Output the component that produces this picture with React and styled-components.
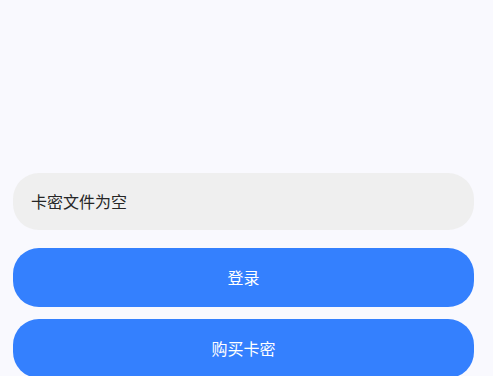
import React from "react";
import styled, { createGlobalStyle } from "styled-components";

const Global = createGlobalStyle`
  html, body { margin: 0; padding: 0; background: #f9f9fe; }
  body { font-family: "Noto Sans CJK SC", "Noto Sans", sans-serif; overflow: hidden; }
`;

const Page = styled.div`
  width: 493px;
  height: 376px;
  box-sizing: border-box;
  padding: 173px 19px 0 13px;
  display: flex;
  flex-direction: column;
  background: #f9f9fe;
  overflow: hidden;
`;

const Field = styled.div`
  flex: none;
  height: 57px;
  border-radius: 26px;
  background: #efefef;
  display: flex;
  align-items: center;
  padding: 0 0 2px 18px;
  box-sizing: border-box;
  font-size: 16px;
  line-height: 1;
  color: #262626;
`;

const Button = styled.button`
  flex: none;
  height: 59px;
  border: none;
  border-radius: 26px;
  background: #3480fe;
  color: #ffffff;
  font-family: inherit;
  font-size: 16px;
  line-height: 1;
  margin-top: ${(p) => p.$gap}px;
  display: flex;
  align-items: center;
  justify-content: center;
  padding: 0 0 2px;
`;

export default function App() {
  return (
    <>
      <Global />
      <Page>
        <Field>卡密文件为空</Field>
        <Button $gap={18}>登录</Button>
        <Button $gap={12}>购买卡密</Button>
      </Page>
    </>
  );
}
